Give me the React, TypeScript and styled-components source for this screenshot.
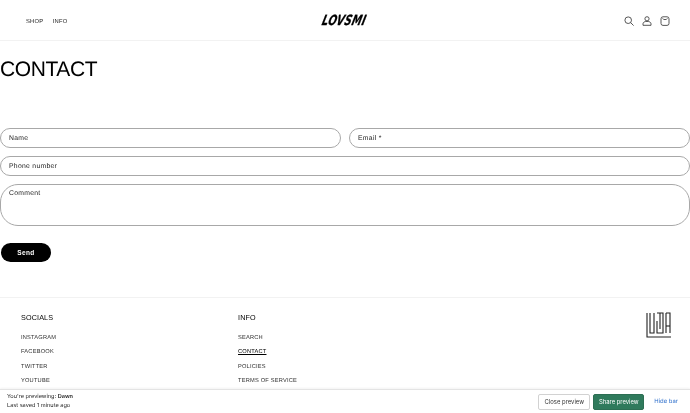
import React from 'react';
import styled, { createGlobalStyle } from 'styled-components';

const GlobalStyle = createGlobalStyle`
  html, body {
    margin: 0;
    padding: 0;
    height: 100%;
    background: #fff;
    overflow: hidden;
  }
  body {
    font-family: 'Liberation Sans', Arial, sans-serif;
    color: #121212;
    text-rendering: geometricPrecision;
    -webkit-font-smoothing: antialiased;
  }
  * {
    box-sizing: border-box;
  }
`;

const Page = styled.div`
  position: relative;
  width: 690px;
  height: 413px;
  overflow: hidden;
  will-change: transform;
`;

const Header = styled.header`
  display: grid;
  grid-template-columns: 270px 96px 1fr;
  align-items: center;
  height: 41px;
  padding: 2px 20px 0 26px;
  border-bottom: 1px solid #f2f2f2;
`;

const Nav = styled.nav`
  display: flex;
  gap: 9.5px;
  padding-top: 1px;
`;

const NavLink = styled.a`
  font-size: 5.8px;
  letter-spacing: 0.2px;
  color: #222;
`;

const Logo = styled.div`
  justify-self: center;
  font-family: 'DejaVu Sans', sans-serif;
  font-size: 14px;
  font-weight: 700;
  font-style: italic;
  line-height: 14px;
  letter-spacing: 0.4px;
  color: #000;
  -webkit-text-stroke: 0.3px #000;
  transform: skewX(-14deg) scaleX(0.7);
`;

const IconRow = styled.div`
  display: flex;
  justify-content: flex-end;
  gap: 8px;
`;

const IconButton = styled.svg`
  width: 10px;
  height: 10px;
  fill: none;
  stroke: #444;
  stroke-width: 0.9;
`;

const Main = styled.main`
  height: 257px;
  border-bottom: 1px solid #f2f2f2;
`;

const Title = styled.h1`
  margin: 0;
  padding-top: 16px;
  font-size: 21px;
  font-weight: 400;
  line-height: 25px;
  letter-spacing: -0.4px;
  color: #000;
`;

const Form = styled.form`
  display: grid;
  grid-template-columns: 1fr 1fr;
  gap: 8px;
  margin-top: 46px;
`;

const Field = styled.div<{ $wide?: boolean; $tall?: boolean }>`
  grid-column: ${p => (p.$wide ? '1 / -1' : 'auto')};
  height: ${p => (p.$tall ? '42px' : '20px')};
  padding: ${p => (p.$tall ? '5px 8px' : '1px 8px 0')};
  display: flex;
  align-items: ${p => (p.$tall ? 'flex-start' : 'center')};
  border: 1px solid #a8a8a8;
  border-radius: ${p => (p.$tall ? '18px' : '10px')};
  font-size: 6.8px;
  letter-spacing: 0.3px;
  color: #222;
`;

const SendButton = styled.button`
  display: block;
  width: 50px;
  height: 19px;
  margin: 17px 0 0 1px;
  padding: 0;
  border: 0;
  border-radius: 10px;
  background: #000;
  color: #fff;
  font-family: inherit;
  font-size: 6.5px;
  font-weight: 700;
  letter-spacing: 0.35px;
`;

const Footer = styled.footer`
  display: grid;
  grid-template-columns: 217px 1fr auto;
  padding: 15px 19px 0 21px;
`;

const FooterColumn = styled.div`
  display: flex;
  flex-direction: column;
`;

const FooterHeading = styled.h2`
  margin: 0 0 11px;
  font-size: 7.2px;
  font-weight: 400;
  line-height: 10px;
  letter-spacing: 0.15px;
  color: #000;
`;

const FooterLink = styled.a<{ $active?: boolean }>`
  height: 14.4px;
  font-size: 5.7px;
  line-height: 9px;
  letter-spacing: 0.2px;
  color: ${p => (p.$active ? '#000' : '#333')};
  text-decoration: ${p => (p.$active ? 'underline' : 'none')};
`;

const Monogram = styled.svg`
  width: 25px;
  height: 26px;
  margin-top: -1px;
  fill: none;
  stroke: #222;
  stroke-width: 1.1;
`;

const PreviewBar = styled.div`
  position: absolute;
  left: 0;
  right: 0;
  bottom: 0;
  height: 24px;
  display: flex;
  align-items: center;
  justify-content: space-between;
  padding: 0 12px 0 7px;
  background: #fff;
  border-top: 1px solid #e4e4e4;
  box-shadow: 0 -1px 2px rgba(0, 0, 0, 0.05);
`;

const PreviewInfo = styled.div`
  margin-top: 1px;
  font-family: Inter, 'Liberation Sans', sans-serif;
  font-size: 5.6px;
  line-height: 8.6px;
  color: #1f1f1f;

  strong {
    font-weight: 600;
  }
`;

const PreviewActions = styled.div`
  display: flex;
  align-items: center;
`;

const PreviewButton = styled.button<{ $primary?: boolean }>`
  height: 16px;
  width: ${p => (p.$primary ? '51px' : '52px')};
  margin-right: 3px;
  padding: 0;
  border: 1px solid ${p => (p.$primary ? '#2c6e53' : '#d2d2d2')};
  border-radius: 2px;
  background: ${p => (p.$primary ? '#2f7a5c' : '#fff')};
  color: ${p => (p.$primary ? '#fff' : '#333')};
  font-family: Inter, 'Liberation Sans', sans-serif;
  font-size: 5.9px;
`;

const HideLink = styled.a`
  margin-left: 7px;
  font-family: Inter, 'Liberation Sans', sans-serif;
  font-size: 5.9px;
  color: #2c6ecb;
`;

const socials = ['INSTAGRAM', 'FACEBOOK', 'TWITTER', 'YOUTUBE'];
const infoLinks = ['SEARCH', 'CONTACT', 'POLICIES', 'TERMS OF SERVICE'];

export default function App() {
  return (
    <Page>
      <GlobalStyle />
      <Header>
        <Nav>
          <NavLink>SHOP</NavLink>
          <NavLink>INFO</NavLink>
        </Nav>
        <Logo>LOVSMI</Logo>
        <IconRow>
          <IconButton viewBox="0 0 10 10">
            <circle cx="4.2" cy="4.2" r="3.3" />
            <path d="M6.6 6.6 9.6 9.6" />
          </IconButton>
          <IconButton viewBox="0 0 10 10">
            <circle cx="5" cy="2.8" r="2.1" />
            <path d="M5 5.4C2.6 5.4 1 6.3 1 7.7V9.3H9V7.7C9 6.3 7.4 5.4 5 5.4Z" />
          </IconButton>
          <IconButton viewBox="0 0 10 10">
            <rect x="1" y="0.8" width="8" height="8.6" rx="2" />
            <path d="M2.6 2.4C3 4 7 4 7.4 2.4" />
          </IconButton>
        </IconRow>
      </Header>

      <Main>
        <Title>CONTACT</Title>
        <Form>
          <Field>Name</Field>
          <Field>Email *</Field>
          <Field $wide>Phone number</Field>
          <Field $wide $tall>Comment</Field>
        </Form>
        <SendButton type="button">Send</SendButton>
      </Main>

      <Footer>
        <FooterColumn>
          <FooterHeading>SOCIALS</FooterHeading>
          {socials.map(label => (
            <FooterLink key={label}>{label}</FooterLink>
          ))}
        </FooterColumn>
        <FooterColumn>
          <FooterHeading>INFO</FooterHeading>
          {infoLinks.map(label => (
            <FooterLink key={label} $active={label === 'CONTACT'}>{label}</FooterLink>
          ))}
        </FooterColumn>
        <Monogram viewBox="0 0 25 26">
          <path d="M1 1V25H25" />
          <path d="M4 1V21H8V1" />
          <path d="M11 1H17V21H11V9" />
          <path d="M14 1V17" />
          <path d="M20 1H24V21" />
          <path d="M20 1V21" />
          <path d="M20 14H24" />
        </Monogram>
      </Footer>

      <PreviewBar>
        <PreviewInfo>
          You're previewing: <strong>Dawn</strong>
          <br />
          Last saved 1 minute ago
        </PreviewInfo>
        <PreviewActions>
          <PreviewButton type="button">Close preview</PreviewButton>
          <PreviewButton type="button" $primary>Share preview</PreviewButton>
          <HideLink>Hide bar</HideLink>
        </PreviewActions>
      </PreviewBar>
    </Page>
  );
}
